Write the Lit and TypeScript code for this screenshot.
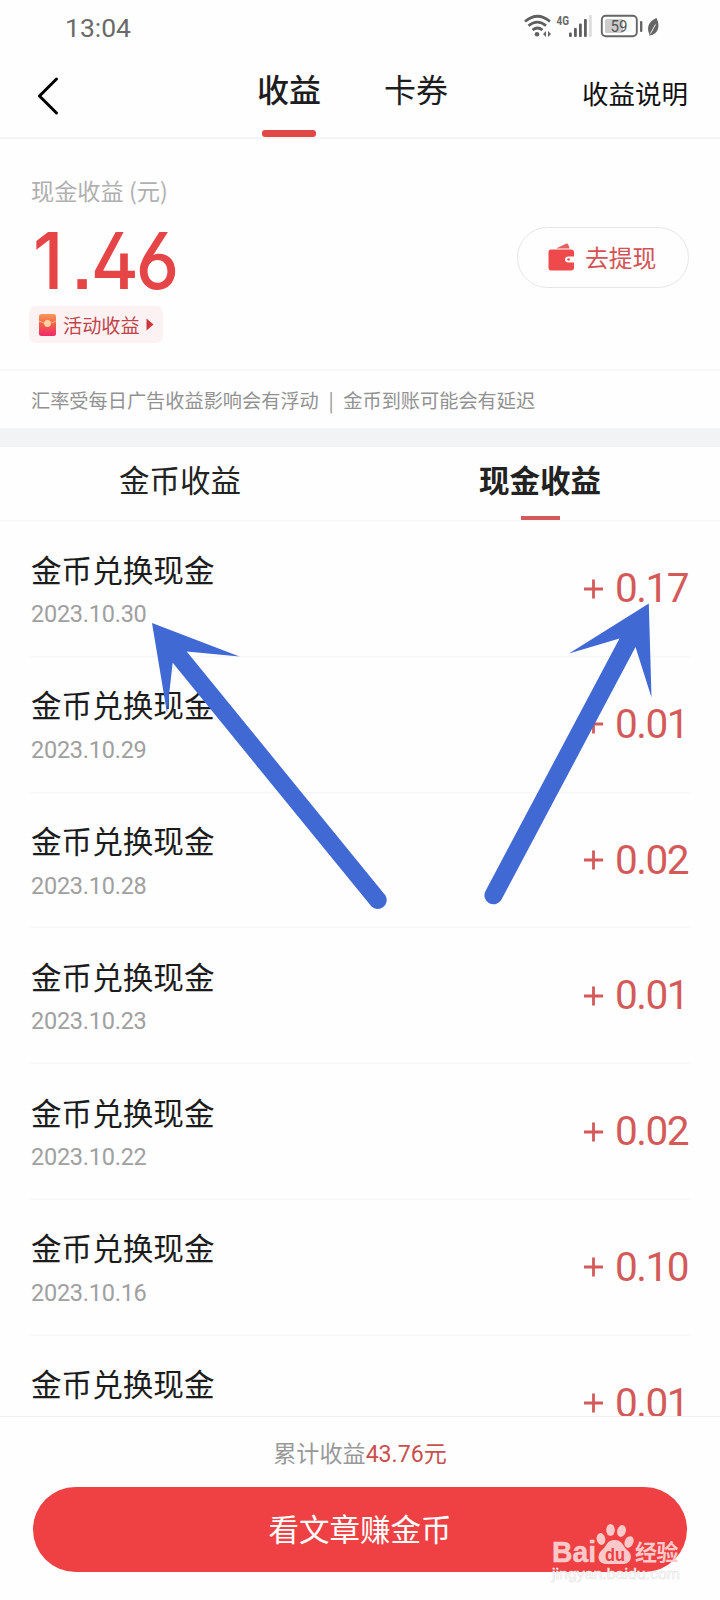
import { LitElement, html, css, nothing } from "lit";
import { customElement } from "lit/decorators.js";

interface Entry {
  date?: string;
  amount: string;
}

const ENTRIES: Entry[] = [
  { date: "2023.10.30", amount: "0.17" },
  { date: "2023.10.29", amount: "0.01" },
  { date: "2023.10.28", amount: "0.02" },
  { date: "2023.10.23", amount: "0.01" },
  { date: "2023.10.22", amount: "0.02" },
  { date: "2023.10.16", amount: "0.10" },
  { amount: "0.01" },
];

@customElement("status-bar")
class StatusBar extends LitElement {
  static styles = css`
    :host { display: flex; justify-content: space-between; height: 52px; padding: 0 58px 0 65px; box-sizing: border-box; color: #6a6a6a; }
    .time { font: 400 26.500px/55px Roboto, sans-serif; letter-spacing: 0; }
    .icons { display: block; margin-top: 10px; }
  `;
  render() {
    return html`
      <span class="time">13:04</span>
      <svg class="icons" width="138" height="32" viewBox="524 10 138 32" fill="none">
        <g stroke="#5f5f5f" stroke-width="2.7" stroke-linecap="butt">
          <path d="M525 21.5Q537.500 11 550 21.500" />
          <path d="M528.500 25.800Q537.500 18.500 546 25.800" />
          <path d="M532.500 30Q537.500 26 542.500 30" />
        </g>
        <circle cx="537" cy="34.300" r="2.300" fill="#5f5f5f" />
        <path d="M543 34L546 31V37ZM551 34L548 31V37Z" fill="#666" />
        <text x="556.500" y="25" font-family="Roboto" font-weight="700" font-size="13.500" textLength="12.500" lengthAdjust="spacingAndGlyphs" fill="#666">4G</text>
        <g fill="#5f5f5f">
          <rect x="569" y="32.500" width="2.800" height="4.500" rx="1" />
          <rect x="574" y="28" width="2.800" height="9" rx="1" />
          <rect x="579" y="23.500" width="2.800" height="13.500" rx="1" />
          <rect x="584" y="19" width="2.800" height="18" rx="1" />
        </g>
        <rect x="589" y="15" width="2.800" height="22" rx="1" fill="#ddd" />
        <rect x="601.800" y="15.800" width="35" height="20.400" rx="4" stroke="#666" stroke-width="1.900" />
        <rect x="605" y="19" width="18" height="14" rx="1.500" fill="#ccc" />
        <text x="610.500" y="32" font-family="Roboto" font-size="16" textLength="17" lengthAdjust="spacingAndGlyphs" fill="#555">59</text>
        <rect x="640" y="21" width="2.400" height="11" rx="1" fill="#666" />
        <path d="M656.500 18C651 20.500 647.800 24 648.100 29.500C648.200 31.500 648.800 33 649.500 34L649 36L650.300 35.300C657.500 34.500 661 26.500 656.500 18Z" fill="#666" />
        <path d="M650.500 33.500L655.500 24.500" stroke="#fff" stroke-width=".9" />
      </svg>
    `;
  }
}

@customElement("page-header")
class PageHeader extends LitElement {
  static styles = css`
    :host { display: grid; grid-template-columns: 226px 126px 128px 1fr; height: 87px; box-sizing: border-box; border-bottom: 2px solid #f4f4f5; color: #1d1d1f; }
    .back { margin: 25px 0 0 36px; }
    .tab { display: flex; flex-direction: column; align-items: center; justify-content: space-between; font-size: 32px; line-height: 73px; }
    .tab-current { font-weight: 500; }
    .bar { width: 54px; height: 6.500px; margin-bottom: .5px; border-radius: 3px; background: #e04848; }
    .help { font-size: 26.500px; line-height: 81px; text-align: right; padding-right: 32px; color: #111; }
  `;
  render() {
    return html`
      <svg class="back" width="24" height="38" viewBox="0 0 24 38" fill="none" stroke="#000" stroke-width="3" stroke-linecap="round" stroke-linejoin="round">
        <path d="M20.500 2L3.500 19L20.500 36" />
      </svg>
      <div class="tab tab-current">收益<span class="bar"></span></div>
      <div class="tab">卡券</div>
      <div class="help">收益说明</div>
    `;
  }
}

@customElement("balance-panel")
class BalancePanel extends LitElement {
  static styles = css`
    :host { display: block; }
    .top { display: flex; justify-content: space-between; height: 232px; box-sizing: border-box; padding: 34px 31px 0 29px; border-bottom: 2px solid #f7f7f8; }
    .label { font-size: 23.200px; line-height: 34px; color: #b0b0b0; padding-left: 2px; }
    .money { font: 450 78px/78px Inter, sans-serif; font-feature-settings: "ss01", "ss07"; letter-spacing: -3.500px; color: #e64548; margin: 15px 0 0 4px; height: 84px; transform: scaleX(.94); transform-origin: left; }
    .lead { letter-spacing: 8px; }
    .point { letter-spacing: -2.500px; }
    .chip { display: flex; align-items: center; width: 134px; height: 37px; box-sizing: border-box; padding-left: 10px; border-radius: 7px; background: #fcf1f3; color: #c0454b; font-size: 19.200px; line-height: 38px; }
    .packet { margin-right: 7px; }
    .caret { margin-left: 6px; }
    .withdraw { display: flex; align-items: flex-start; width: 172px; height: 61px; box-sizing: border-box; margin-top: 54px; padding-left: 30px; border: 1.500px solid #e6e6e8; border-radius: 31px; color: #d35355; font-size: 23.800px; line-height: 58px; }
    .wallet { margin: 15px 10px 0 0; }
    .notice { display: flex; height: 57px; padding-left: 31px; font-size: 19.200px; line-height: 58px; color: #929292; }
    .divider { width: 24.500px; text-align: center; }
  `;
  render() {
    return html`
      <div class="top">
        <div>
          <div class="label">现金收益 (元)</div>
          <div class="money"><span class="lead">1</span><span class="point">.</span>46</div>
          <div class="chip">
            <svg class="packet" width="17" height="22" viewBox="0 0 17 22">
              <defs>
                <linearGradient id="p" x1="0" y1="0" x2="0" y2="1">
                  <stop offset="0" stop-color="#f79a55" /><stop offset=".45" stop-color="#f4604b" /><stop offset="1" stop-color="#f02a68" />
                </linearGradient>
              </defs>
              <rect width="17" height="22" rx="2.500" fill="url(#p)" />
              <path d="M0 7Q8.500 12 17 7" stroke="#fbb57c" fill="none" />
              <circle cx="8.500" cy="9.500" r="3.400" fill="#fcd0a0" />
            </svg>
            活动收益
            <svg class="caret" width="8" height="13" viewBox="0 0 8 13"><path d="M.5 .5L7.500 6.500L.5 12.500Z" fill="#c9383d" /></svg>
          </div>
        </div>
        <div class="withdraw">
          <svg class="wallet" width="27" height="28" viewBox="0 0 27 28">
            <path d="M8 5.500L18.500 .5Q20.500 .3 21.500 5.500Z" fill="#e2625f" />
            <path d="M3 6.500H23Q26 6.500 26 9.500V13.500H20.500Q17 13.500 17 16.500T20.500 19.500H26V24.500Q26 27.500 23 27.500H3Q.5 27.500 .5 24.500V9.500Q.5 6.500 3 6.500Z" fill="#ee4a4b" />
            <circle cx="20.500" cy="16.500" r="1.300" fill="#ee4a4b" />
          </svg>
          去提现
        </div>
      </div>
      <div class="notice"><span>汇率受每日广告收益影响会有浮动</span><span class="divider">|</span><span>金币到账可能会有延迟</span></div>
    `;
  }
}

@customElement("income-list")
class IncomeList extends LitElement {
  static styles = css`
    :host { display: block; height: 988px; overflow: hidden; border-top: 19px solid #f2f3f5; box-sizing: border-box; }
    .tabs { display: grid; grid-template-columns: 1fr 1fr; height: 74px; box-sizing: border-box; border-bottom: 1.500px solid #f5f5f6; font-size: 30.500px; line-height: 64px; color: #222; }
    .tab { display: flex; flex-direction: column; align-items: center; }
    .tab-current { font-weight: 700; }
    .bar { width: 39px; height: 4px; margin-top: 5px; background: #d5595b; }
    .row { display: flex; justify-content: space-between; height: 135.800px; box-sizing: border-box; margin: 0 31px; border-bottom: 1.500px solid #f5f5f6; }
    .title { font-size: 30.600px; line-height: 44px; margin-top: 25.500px; color: #1c1c1c; }
    .date { font: 400 23.500px/30px Roboto, sans-serif; letter-spacing: -0.250px; margin-top: 8.500px; color: #a0a0a0; }
    .amount { display: flex; align-items: center; gap: 12px; width: 106px; height: 135px; color: #d35a58; font: 400 40.500px/135px Roboto, sans-serif; letter-spacing: -1.500px; }
  `;
  render() {
    return html`
      <div class="tabs">
        <div class="tab">金币收益</div>
        <div class="tab tab-current">现金收益<span class="bar"></span></div>
      </div>
      ${ENTRIES.map(
        (e) => html`
          <div class="row">
            <div>
              <div class="title">金币兑换现金</div>
              ${e.date ? html`<div class="date">${e.date}</div>` : nothing}
            </div>
            <div class="amount">
              <svg width="20" height="20" viewBox="0 0 20 20" stroke="#d35a58" stroke-width="2.800"><path d="M10.500 .5V19.500M1 10H20" /></svg>
              <span>${e.amount}</span>
            </div>
          </div>
        `
      )}
    `;
  }
}

@customElement("bottom-bar")
class BottomBar extends LitElement {
  static styles = css`
    :host { display: block; position: relative; height: 184px; box-sizing: border-box; border-top: 1.500px solid #f0f0f1; padding: 0 33px; }
    .total { height: 70px; text-align: center; font-size: 23.100px; line-height: 71px; color: #999; }
    .sum { color: #c9504f; }
    .num { font-family: Roboto, sans-serif; }
    .go { height: 85px; border-radius: 43px; background: #ef4143; color: #fff; text-align: center; font-size: 30.500px; line-height: 82px; }
    .mark { position: absolute; left: 550px; top: 100px; }
  `;
  render() {
    return html`
      <div class="total">累计收益<span class="sum"><span class="num">43.76</span>元</span></div>
      <div class="go">看文章赚金币</div>
      <svg class="mark" width="140" height="70" viewBox="550 1516 140 70">
        <g fill="#fbc9ca">
          <text x="552" y="1561" font-family="Liberation Sans" font-weight="700" font-size="30" textLength="44" lengthAdjust="spacingAndGlyphs" stroke="#fbc9ca" stroke-width=".5">Bai</text>
          <ellipse cx="601" cy="1538" rx="4.300" ry="6" transform="rotate(-12 601 1538)" />
          <ellipse cx="610.500" cy="1529" rx="4.300" ry="6" />
          <ellipse cx="621.500" cy="1530" rx="4.300" ry="6" transform="rotate(14 621.500 1530)" />
          <ellipse cx="629" cy="1541" rx="4.300" ry="6" transform="rotate(25 629 1541)" />
          <path d="M614.500 1539C622 1539 623 1545 627 1549C634 1554 631 1563 623 1563H606C598 1563 596 1554 602 1549C607 1545 607 1539 614.500 1539Z" />
          <text x="635" y="1559" font-family="Noto Sans CJK SC" font-weight="700" font-size="22" textLength="43.500">经验</text>
        </g>
        <text x="605" y="1559.500" font-family="Liberation Sans" font-weight="700" font-size="18" textLength="20" lengthAdjust="spacingAndGlyphs" fill="#ef4143">du</text>
        <text x="552" y="1578" font-family="Liberation Sans" font-size="14.500" textLength="128" lengthAdjust="spacingAndGlyphs" fill="#fff" stroke="#e3e3e3" stroke-width=".5">jingyan.baidu.com</text>
      </svg>
    `;
  }
}

@customElement("app-root")
class AppRoot extends LitElement {
  static styles = css`
    :host { display: block; position: relative; width: 720px; height: 1600px; overflow: hidden; background: #fefefe; font-family: "Noto Sans CJK SC", sans-serif; }
    .arrows { position: absolute; left: 0; top: 0; pointer-events: none; }
  `;
  render() {
    return html`
      <status-bar></status-bar>
      <page-header></page-header>
      <balance-panel></balance-panel>
      <income-list></income-list>
      <bottom-bar></bottom-bar>
      <svg class="arrows" width="720" height="1600" fill="#4169d3">
        <path d="M152 623L239.500 656.500L186.700 651.500L385.500 895.500A9 9 0 0 1 371.500 906.500L172.700 662.700L167 713Z" />
        <path d="M648.800 603.500L651.500 697.500L635.500 647L501.500 899.500A9 9 0 0 1 485.500 891L619.500 638.500L569 653.500Z" />
      </svg>
    `;
  }
}
